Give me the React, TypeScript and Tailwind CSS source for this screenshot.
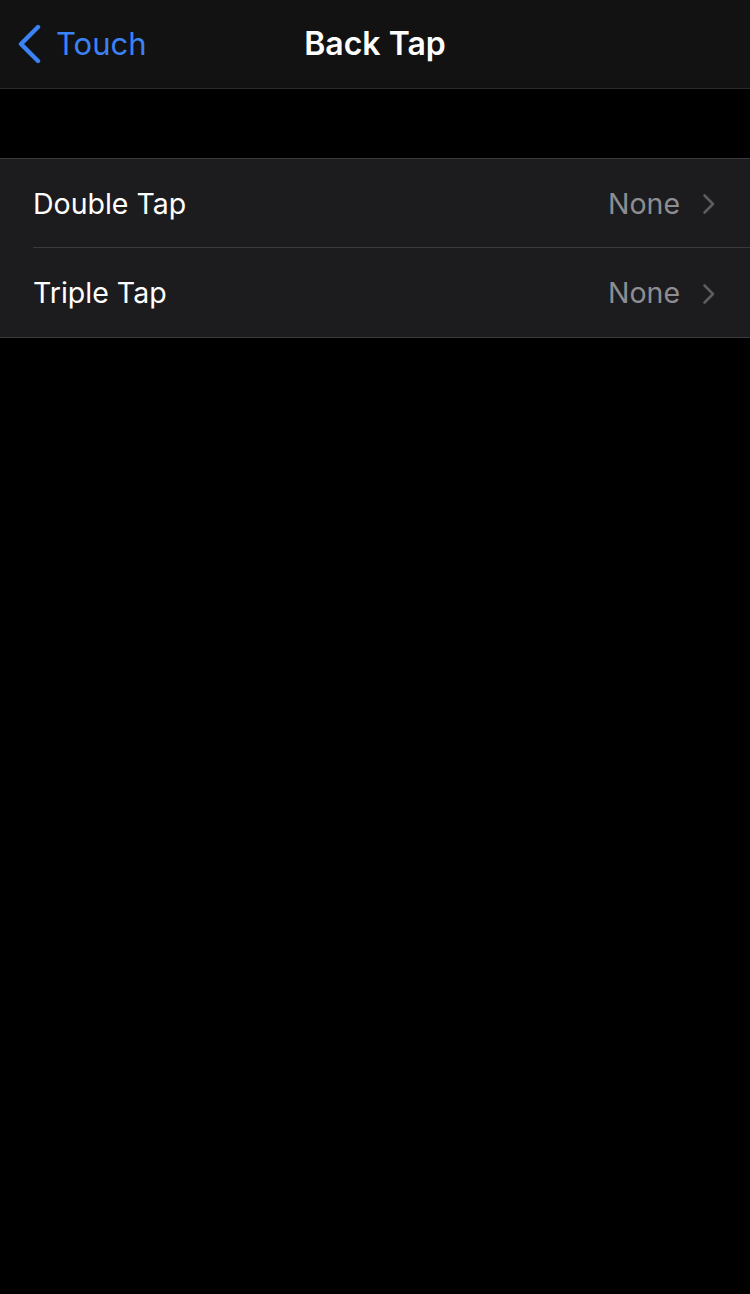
import React from "react";

function Chevron() {
  return (
    <svg width="14" height="22" viewBox="0 0 14 22" fill="none">
      <path d="M2.5 2.5 L11 11 L2.5 19.5" stroke="#5c5c61" strokeWidth="2.6" strokeLinecap="round" strokeLinejoin="round" />
    </svg>
  );
}

function Row({ label, value, last }: { label: string; value: string; last?: boolean }) {
  return (
    <div className="flex h-[89px] items-stretch pl-[33px]">
      <div className={`flex flex-1 items-center pt-[2px] pr-[34px] ${last ? "" : "border-b border-[#3a3a3c]"}`}>
        <span className="flex-1 text-[28.5px] text-white">{label}</span>
        <span className="mr-[22px] text-[28.5px] text-[#8d8d93]">{value}</span>
        <Chevron />
      </div>
    </div>
  );
}

export default function App() {
  return (
    <div className="h-[1294px] w-[750px] bg-black" style={{ fontFamily: "Inter, 'Noto Sans', sans-serif" }}>
      <div className="relative flex h-[89px] items-center border-b border-[#2a2a2c] bg-[#121212]">
        <div className="flex items-center pl-[17px]">
          <svg width="26" height="40" viewBox="0 0 26 40" fill="none">
            <path d="M21 3 L4 20 L21 37" stroke="#3b82f6" strokeWidth="4.4" strokeLinecap="round" strokeLinejoin="round" />
          </svg>
          <span className="ml-[13px] text-[31px] text-[#3b82f6]">Touch</span>
        </div>
        <div className="pointer-events-none absolute inset-x-0 text-center text-[32px] font-semibold text-white">Back Tap</div>
      </div>
      <div className="h-[69px]" />
      <div className="border-y border-[#3a3a3c] bg-[#1c1c1e]">
        <Row label="Double Tap" value="None" />
        <Row label="Triple Tap" value="None" last />
      </div>
    </div>
  );
}
